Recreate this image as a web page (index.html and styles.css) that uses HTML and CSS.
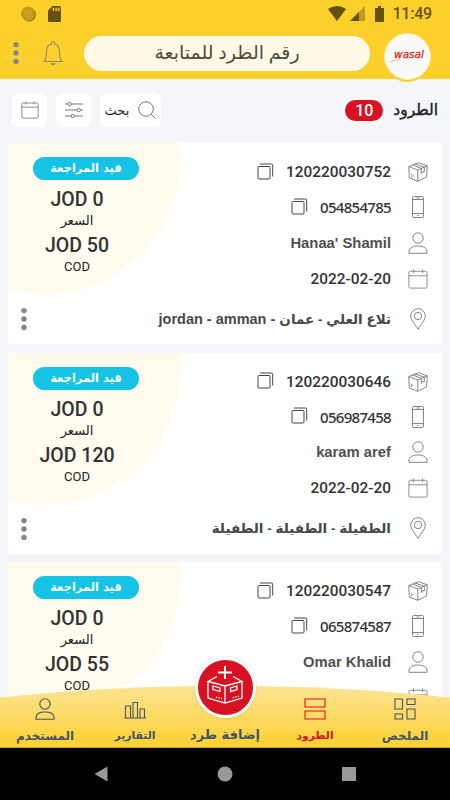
FILE: index.html
```html
<!DOCTYPE html>
<html lang="ar" dir="rtl">
<head>
    <meta charset="UTF-8">
    <meta name="viewport" content="width=device-width, initial-scale=1.0">
    <title>الطرود</title>
    <link rel="stylesheet" href="styles.css">
</head>
<body>
    <!-- Shared icons -->
    <svg class="sprite" width="0" height="0">
        <symbol id="i-box" viewBox="0 0 20 20">
            <path d="M.8 4.500 L10.500 .700 L19.200 3.800 L18.600 14.800 L9.800 19.300 L1.300 15.800 Z M.8 4.500 L9.800 8 L19.200 3.800 M9.800 8 V19.300 M4.800 3 L13.300 6.400 M7.200 2 L16.300 5.200 M13.300 6.400 V11.500 L14.800 9.500 L16.300 10 V5.200 M3 12 L4 13 M3 14.500 L5.500 13.500"/>
        </symbol>
        <symbol id="i-phone" viewBox="0 0 20 22">
            <rect x="4.500" y=".500" width="11" height="21" rx="1.200"/>
            <path d="M4.500 3.500 H15.500 M4.500 17.500 H15.500 M8.500 2 H11.500 M9.300 19.500 H10.700"/>
        </symbol>
        <symbol id="i-user" viewBox="0 0 20 22">
            <circle cx="10" cy="6" r="5.200"/>
            <path d="M1 21.300 V19 C1.400 15.800 5 14 10 14 S18.600 15.800 19 19 V21.300 Z"/>
        </symbol>
        <symbol id="i-date" viewBox="0 0 22 22">
            <rect x="1" y="2.500" width="20" height="18.500" rx="1.500"/>
            <path d="M1 7.500 H21 M6 .500 V4.500 M16 .500 V4.500"/>
        </symbol>
        <symbol id="i-pin" viewBox="0 0 20 22">
            <path d="M10 21.300 C7 16.500 2.700 12 2.700 8 A7.300 7.300 0 0 1 17.300 8 C17.300 12 13 16.500 10 21.300 Z"/>
            <circle cx="10" cy="8" r="3.700"/>
        </symbol>
        <symbol id="i-copy" viewBox="0 0 17 17">
            <rect x="1" y="3.500" width="12" height="12.500" rx="1"/>
            <path d="M3 1 H14.500 Q15.700 1 15.700 2.200 V13.500"/>
        </symbol>
        <symbol id="i-dots" viewBox="0 0 6 24">
            <circle cx="3" cy="3.600" r="2.700"/>
            <circle cx="3" cy="12" r="2.700"/>
            <circle cx="3" cy="20.400" r="2.700"/>
        </symbol>
    </svg>

    <div class="screen">
        <header class="header">
            <div class="status" dir="ltr">
                <svg width="15" height="16" viewBox="0 0 15 16">
                    <circle cx="8" cy="8.500" r="7" fill="#9a7a10"/>
                    <circle cx="7" cy="7.600" r="7" fill="#c8a020"/>
                    <circle cx="7" cy="7.600" r="5.300" fill="none" stroke="#a98616" stroke-dasharray="1 1"/>
                </svg>
                <svg width="13" height="16" viewBox="0 0 13 16">
                    <path d="M4.500 0 H11.500 Q13 0 13 1.500 V14.500 Q13 16 11.500 16 H1.500 Q0 16 0 14.500 V4.500 Z" fill="#66500f"/>
                    <path d="M5.500 1.800 V5 M8.200 1.800 V5 M10.800 1.800 V5" stroke="#fbd02a" stroke-width="1.500"/>
                </svg>
                <span class="grow"></span>
                <svg width="18" height="15" viewBox="0 0 18 15">
                    <path d="M0 3 Q9 -3 18 3 L9 15 Z" fill="#66500f"/>
                </svg>
                <svg class="signal" width="15" height="15" viewBox="0 0 15 15">
                    <path d="M0 15 L15 0 V15 Z" fill="#c09a1e"/>
                    <path d="M0 15 L9 6 V15 Z" fill="#66500f"/>
                </svg>
                <svg class="battery" width="9" height="16" viewBox="0 0 9 16">
                    <path d="M3 0 H6 V2 H9 V16 H0 V2 H3 Z" fill="#66500f"/>
                </svg>
                <span class="clock">11:49</span>
            </div>
            <div class="topbar">
                <div class="logo">
                    <span>wasal</span>
                    <svg width="11" height="5" viewBox="0 0 11 5"><path d="M0 4 Q2 5 3 2 Q5 4 6 2 Q8 3 9 1 L10.500 3" fill="none" stroke="#e09090" stroke-width=".7"/></svg>
                </div>
                <div class="track">رقم الطرد للمتابعة</div>
                <svg class="bell" width="20" height="25" viewBox="0 0 20 25">
                    <path d="M1 20.500 C3.500 18 3.500 15 3.500 10.500 C3.500 6 6 3.500 8.500 3 V2.200 A1.500 1.500 0 0 1 11.500 2.200 V3 C14 3.500 16.500 6 16.500 10.500 C16.500 15 16.500 18 19 20.500 Z" fill="none" stroke="#8a8779" stroke-width="1.100"/>
                    <path d="M7.500 22.300 H12.500 A2.500 2 0 0 1 7.500 22.300 Z" fill="#8a8779"/>
                </svg>
                <svg class="dots" width="6" height="24"><use href="#i-dots"/></svg>
            </div>
        </header>

        <div class="toolbar">
            <h1>الطرود</h1>
            <span class="count">10</span>
            <span class="grow"></span>
            <div class="tool search">
                <svg width="18" height="18" viewBox="0 0 18 18"><circle cx="8" cy="8" r="7.300"/><path d="M13.200 13.200 L17.500 17.500"/></svg>
                <span>بحث</span>
            </div>
            <div class="tool">
                <svg width="18" height="18" viewBox="0 0 18 18">
                    <path d="M0 3 H3 M6.500 3 H18 M0 9 H12 M15.500 9 H18 M0 15 H6 M9.500 15 H18"/>
                    <circle cx="4.700" cy="3" r="1.700"/><circle cx="13.700" cy="9" r="1.700"/><circle cx="7.700" cy="15" r="1.700"/>
                </svg>
            </div>
            <div class="tool">
                <svg width="18" height="18"><use href="#i-date"/></svg>
            </div>
        </div>

        <main class="list">
            <article class="card">
                <div class="details">
                    <div class="row"><svg class="icon"><use href="#i-box"/></svg><span class="num">120220030752</span><svg class="copy"><use href="#i-copy"/></svg></div>
                    <div class="row"><svg class="icon"><use href="#i-phone"/></svg><span class="tel">054854785</span><svg class="copy"><use href="#i-copy"/></svg></div>
                    <div class="row"><svg class="icon"><use href="#i-user"/></svg><span class="name" dir="ltr">Hanaa' Shamil</span></div>
                    <div class="row"><svg class="icon"><use href="#i-date"/></svg><span class="num" dir="ltr">2022-02-20</span></div>
                    <div class="row address"><svg class="icon"><use href="#i-pin"/></svg><span class="place" dir="ltr"><span class="latin">jordan - amman - </span>تلاع العلي - عمان</span></div>
                </div>
                <div class="price">
                    <span class="state">قيد المراجعة</span>
                    <b dir="ltr">JOD 0</b>
                    <small>السعر</small>
                    <b dir="ltr">JOD 50</b>
                    <small class="cod">COD</small>
                    <svg class="dots" width="6" height="24"><use href="#i-dots"/></svg>
                </div>
            </article>

            <article class="card">
                <div class="details">
                    <div class="row"><svg class="icon"><use href="#i-box"/></svg><span class="num">120220030646</span><svg class="copy"><use href="#i-copy"/></svg></div>
                    <div class="row"><svg class="icon"><use href="#i-phone"/></svg><span class="tel">056987458</span><svg class="copy"><use href="#i-copy"/></svg></div>
                    <div class="row"><svg class="icon"><use href="#i-user"/></svg><span class="name" dir="ltr">karam aref</span></div>
                    <div class="row"><svg class="icon"><use href="#i-date"/></svg><span class="num" dir="ltr">2022-02-20</span></div>
                    <div class="row address"><svg class="icon"><use href="#i-pin"/></svg><span class="place">الطفيلة - الطفيلة - الطفيلة</span></div>
                </div>
                <div class="price">
                    <span class="state">قيد المراجعة</span>
                    <b dir="ltr">JOD 0</b>
                    <small>السعر</small>
                    <b dir="ltr">JOD 120</b>
                    <small class="cod">COD</small>
                    <svg class="dots" width="6" height="24"><use href="#i-dots"/></svg>
                </div>
            </article>

            <article class="card">
                <div class="details">
                    <div class="row"><svg class="icon"><use href="#i-box"/></svg><span class="num">120220030547</span><svg class="copy"><use href="#i-copy"/></svg></div>
                    <div class="row"><svg class="icon"><use href="#i-phone"/></svg><span class="tel">065874587</span><svg class="copy"><use href="#i-copy"/></svg></div>
                    <div class="row"><svg class="icon"><use href="#i-user"/></svg><span class="name" dir="ltr">Omar Khalid</span></div>
                    <div class="row"><svg class="icon"><use href="#i-date"/></svg></div>
                </div>
                <div class="price">
                    <span class="state">قيد المراجعة</span>
                    <b dir="ltr">JOD 0</b>
                    <small>السعر</small>
                    <b dir="ltr">JOD 55</b>
                    <small class="cod">COD</small>
                </div>
            </article>
        </main>

        <nav class="nav">
            <svg class="curve" width="450" height="62" viewBox="0 0 450 62">
                <defs>
                    <linearGradient id="gold" x1="0" y1="0" x2="0" y2="1">
                        <stop offset="0" stop-color="#fde494"/>
                        <stop offset="1" stop-color="#fbd02f"/>
                    </linearGradient>
                </defs>
                <path d="M0 11.500 Q225 -12 450 11.500 V62 H0 Z" fill="url(#gold)"/>
                <path d="M0 61.500 H450" stroke="#c9a52a"/>
            </svg>
            <a class="item">
                <svg width="22" height="22" viewBox="0 0 22 22"><path d="M1 1 H8.500 V11 H1 Z M13 1 H21 V6.500 H13 Z M1 16 H8.500 V21 H1 Z M13 11 H21 V21 H13 Z"/></svg>
                <span>الملخص</span>
            </a>
            <a class="item short active">
                <svg width="22" height="22" viewBox="0 0 22 22"><path d="M1 1 H21 V9 H1 Z M1 13 H21 V21 H1 Z"/></svg>
                <span>الطرود</span>
            </a>
            <a class="item add">
                <div class="fab">
                    <svg width="40" height="44" viewBox="0 0 40 44">
                        <path d="M20 2 V15 M13 8.500 H27" stroke-width="2"/>
                        <path d="M12 12.500 L3 17.500 L20 22 L37 17.500 L28 12.500 M3 17.500 V34 L20 39 L37 34 V17.500 M20 22 V39"/>
                        <path d="M8 22 L15 24 V27.500 L8 25.500 Z M32 22 L25.500 24 V27.500 L32 25.500 Z"/>
                        <path d="M11 33 L17 34.700 M34 32 L27 34" stroke-dasharray="1.300 1.300"/>
                    </svg>
                </div>
                <span>إضافة طرد</span>
            </a>
            <a class="item short">
                <svg width="22" height="22" viewBox="0 0 22 22"><path d="M1.500 19.500 V8 H6.500 V19.500 M9 19.500 V4.500 H13.500 V19.500 M16 19.500 V11 H20.500 V19.500 M.500 20 H22"/></svg>
                <span>التقارير</span>
            </a>
            <a class="item">
                <svg width="20" height="22"><use href="#i-user"/></svg>
                <span>المستخدم</span>
            </a>
        </nav>

        <div class="system">
            <svg width="14" height="14" viewBox="0 0 14 14"><rect width="14" height="14"/></svg>
            <svg width="16" height="16" viewBox="0 0 16 16"><circle cx="8" cy="8" r="7.500"/></svg>
            <svg width="14" height="16" viewBox="0 0 14 16"><path d="M13.500 .500 V15.500 L.500 8 Z"/></svg>
        </div>
    </div>
</body>
</html>
```
FILE: styles.css
```css
* {
    margin: 0;
    padding: 0;
    box-sizing: border-box;
}

body {
    font-family: Roboto, "DejaVu Sans", sans-serif;
    background: #f4f6f9;
    color: #333;
}

svg {
    display: block;
    flex-shrink: 0;
}

.sprite {
    position: absolute;
}

.screen {
    width: 450px;
    height: 800px;
    display: flex;
    flex-direction: column;
    overflow: hidden;
}

.grow {
    flex: 1;
}

/* Header */
.header {
    height: 79px;
    background: #fbd02a;
    flex-shrink: 0;
}

.status {
    height: 27px;
    padding: 0 18px 0 21px;
    display: flex;
    align-items: center;
    gap: 12px;
}

.status .signal {
    margin-left: -8px;
}

.status .battery {
    margin-left: -2px;
}

.clock {
    margin-left: -4px;
    font-size: 16px;
    font-weight: 500;
    letter-spacing: -.2px;
    color: #66500f;
    line-height: 27px;
}

.topbar {
    display: flex;
    align-items: center;
    height: 52px;
    padding: 0 20px 0 13px;
}

.logo {
    width: 47px;
    height: 47px;
    margin: 6px -1px 0 0;
    border-radius: 50%;
    background: #fbfafa;
    border: 1px solid #fde9a0;
    box-shadow: 0 2px 0 #fbd02a;
    display: flex;
    flex-direction: column;
    align-items: center;
    padding-top: 16px;
    position: relative;
    flex-shrink: 0;
}

.logo span {
    margin-left: 3px;
    font: italic 10.500px/9px "DejaVu Sans", sans-serif;
    color: #d8281c;
    -webkit-text-stroke: .3px #d8281c;
}

.logo svg {
    margin: -1px 0 0 -24px;
}

.track {
    width: 286px;
    height: 35px;
    margin-right: 14px;
    border-radius: 18px;
    background: #fff9e6;
    color: #4f4a3a;
    font-size: 19px;
    line-height: 33px;
    text-align: center;
    white-space: nowrap;
}

.bell {
    margin-right: 21px;
}

.dots {
    fill: #858585;
}

.topbar .dots {
    margin-right: auto;
}

/* Toolbar */
.toolbar {
    display: flex;
    align-items: center;
    height: 64px;
    padding: 0 12px 2px;
    flex-shrink: 0;
}

.toolbar h1 {
    font-size: 15.500px;
    font-weight: normal;
    font-family: "DejaVu Sans", sans-serif;
    color: #222;
    -webkit-text-stroke: .4px #222;
}

.count {
    width: 38px;
    height: 21px;
    margin-right: 10px;
    border-radius: 11px;
    background: #d71222;
    color: #fff;
    font-size: 16px;
    font-weight: 500;
    line-height: 22px;
    text-align: center;
}

.tool {
    width: 35px;
    height: 34px;
    margin-right: 9px;
    border-radius: 7px;
    background: #fff;
    display: flex;
    align-items: center;
    justify-content: center;
    gap: 9px;
}

.tool svg {
    fill: none;
    stroke: #777;
}

.search {
    width: 61px;
    font-size: 13px;
    color: #222;
}

/* Cards */
.list {
    flex: 1;
    min-height: 0;
    overflow: hidden;
    padding: 0 8px;
    display: flex;
    flex-direction: column;
    gap: 8.500px;
}

.card {
    height: 201px;
    flex-shrink: 0;
    display: flex;
    justify-content: space-between;
    background: radial-gradient(circle at 35px 14px, #fffbee 137.500px, #fff 138.500px);
}

.details {
    padding: 12px 14px 0 0;
}

.row {
    height: 35.500px;
    display: flex;
    align-items: center;
    white-space: nowrap;
}

.row:first-child {
    height: 34.500px;
}

.row:nth-child(4) {
    height: 36px;
}

.address {
    height: 44px;
}

.icon {
    width: 20px;
    height: 22px;
    margin-left: 17px;
    fill: none;
    stroke: #777;
    stroke-width: .9;
}

.copy {
    width: 17px;
    height: 17px;
    margin: -2px 12px 0 0;
    fill: none;
    stroke: #444;
}

.num {
    font-size: 15.400px;
    font-weight: 500;
}

.tel {
    font-family: "Noto Sans", sans-serif;
    font-size: 15px;
    font-weight: 500;
    letter-spacing: -.7px;
}

.name {
    font-family: "Liberation Sans", sans-serif;
    font-size: 14.800px;
    font-weight: bold;
    color: #505050;
}

.place {
    font-family: "Liberation Sans", "DejaVu Sans", sans-serif;
    font-size: 13.500px;
    font-weight: bold;
    color: #484848;
}

.latin {
    font-size: 14.500px;
}

.price {
    width: 138px;
    padding-top: 14px;
    display: flex;
    flex-direction: column;
    align-items: center;
}

.state {
    width: 106px;
    height: 23px;
    margin-right: -18px;
    border-radius: 12px;
    background: #15c3e4;
    color: #fff;
    font: bold 11.500px/22px "DejaVu Sans", sans-serif;
    text-align: center;
}

.price b {
    height: 24px;
    margin-top: 7px;
    font-size: 19.500px;
    font-weight: 500;
    line-height: 26px;
}

.price small {
    height: 15px;
    font-size: 13px;
    line-height: 19px;
    color: #222;
}

.price .dots {
    margin: 35px 107px 0 0;
}

/* Bottom navigation */
.nav {
    height: 62px;
    margin-top: -62px;
    display: flex;
    position: relative;
    flex-shrink: 0;
}

.curve {
    position: absolute;
    left: 0;
    top: 0;
}

.item {
    width: 90px;
    position: relative;
    display: flex;
    flex-direction: column;
    align-items: center;
    padding-top: 12px;
    color: #44546a;
    font: bold 12px/16px "DejaVu Sans", sans-serif;
}

.item > svg {
    fill: none;
    stroke: #44546a;
    stroke-width: 1.100;
    margin-bottom: 8px;
}

.item span {
    white-space: nowrap;
}

.short {
    font-size: 10.800px;
}

.active {
    color: #d71222;
}

.active > svg {
    stroke: #d71222;
}

.add {
    padding-top: 0;
    font-size: 13px;
}

.fab {
    width: 61px;
    height: 61px;
    margin: -29px 0 9px;
    border: 3px solid #fff;
    border-radius: 50%;
    background: #d71222;
    box-shadow: 0 0 3px rgba(0, 0, 0, 0.15);
    display: flex;
    align-items: center;
    justify-content: center;
    flex-shrink: 0;
}

.fab svg {
    margin-top: -3px;
    fill: none;
    stroke: #fff;
    stroke-width: 1.300;
}

/* Android buttons */
.system {
    height: 52px;
    background: #000;
    display: flex;
    align-items: center;
    justify-content: space-between;
    padding: 0 94px;
    fill: #999;
    flex-shrink: 0;
}
```
